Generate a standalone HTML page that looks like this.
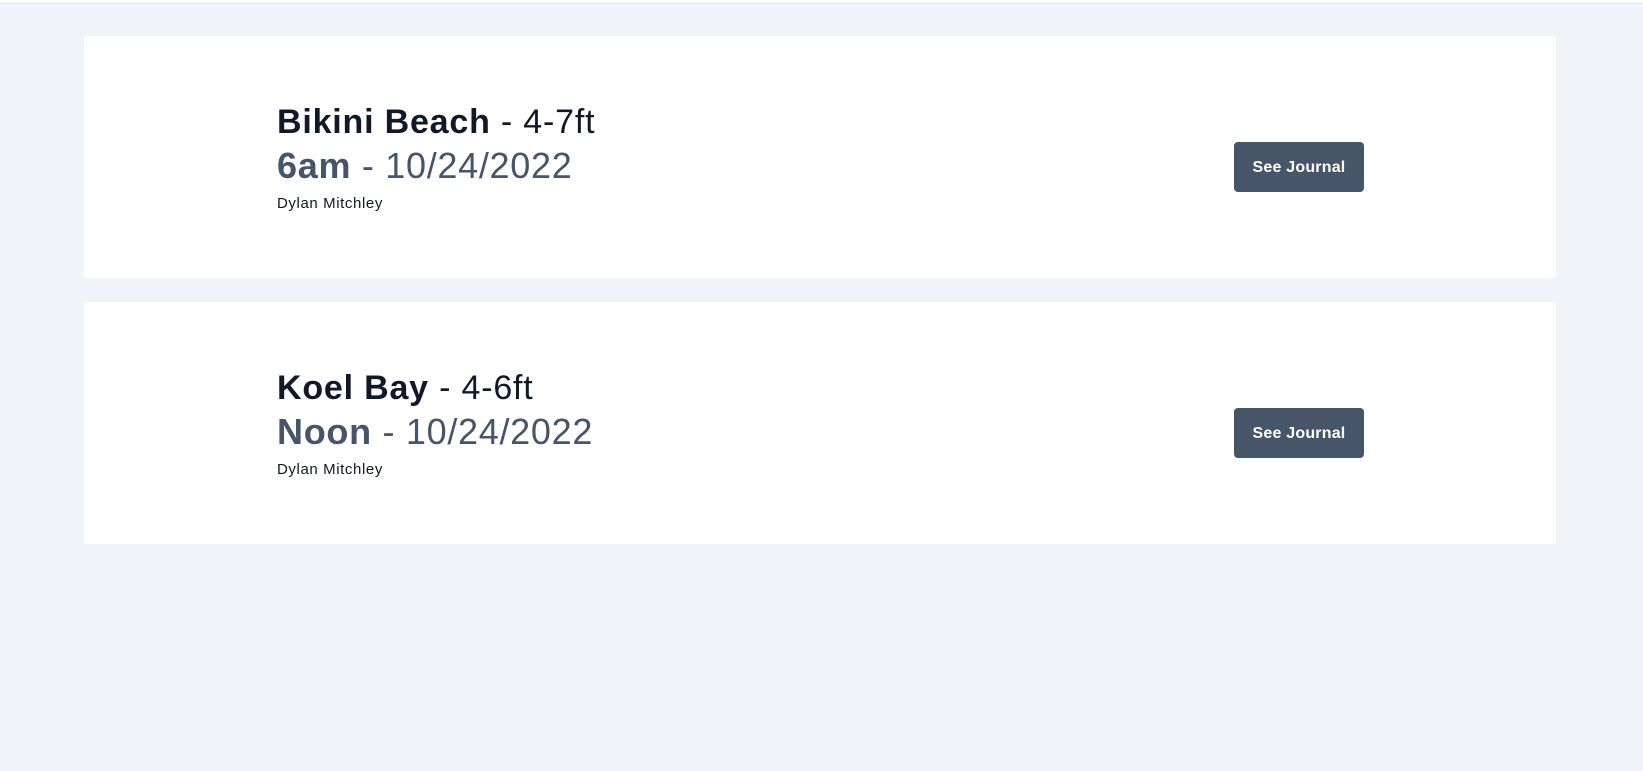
<!DOCTYPE html>
<html><head><meta charset="utf-8"><style>
html,body{margin:0;padding:0;}
body{width:1643px;height:771px;background:#f0f3f8;font-family:"Liberation Sans",sans-serif;position:relative;overflow:hidden;}
.topline{position:absolute;left:0;top:0;width:1643px;height:3px;background:#fff;border-bottom:1px solid #e2e5ea;}
.card{position:absolute;left:84px;width:1472px;height:242px;background:#fff;}
.txt{position:absolute;left:193px;top:64px;}
.l1{font-size:34px;color:#111827;line-height:44px;white-space:nowrap;letter-spacing:0.8px;}
.l2{font-size:36px;color:#475569;line-height:44px;white-space:nowrap;letter-spacing:0.7px;}
b{font-weight:700;}
.l3{font-size:15px;color:#111827;line-height:20px;margin-top:6px;letter-spacing:0.6px;}
.btn{position:absolute;left:1150px;top:106px;width:130px;height:50px;background:#475569;border-radius:4px;color:#fff;font-size:16px;font-weight:600;display:flex;align-items:center;justify-content:center;padding-top:2px;box-sizing:border-box;letter-spacing:0.2px;}
</style></head><body>
<div class="topline"></div>
<div class="card" style="top:36px">
  <div class="txt">
    <div class="l1"><b>Bikini Beach</b> - 4-7ft</div>
    <div class="l2"><b>6am</b> - 10/24/2022</div>
    <div class="l3">Dylan Mitchley</div>
  </div>
  <div class="btn">See Journal</div>
</div>
<div class="card" style="top:302px">
  <div class="txt">
    <div class="l1"><b>Koel Bay</b> - 4-6ft</div>
    <div class="l2"><b>Noon</b> - 10/24/2022</div>
    <div class="l3">Dylan Mitchley</div>
  </div>
  <div class="btn">See Journal</div>
</div>
</body></html>
